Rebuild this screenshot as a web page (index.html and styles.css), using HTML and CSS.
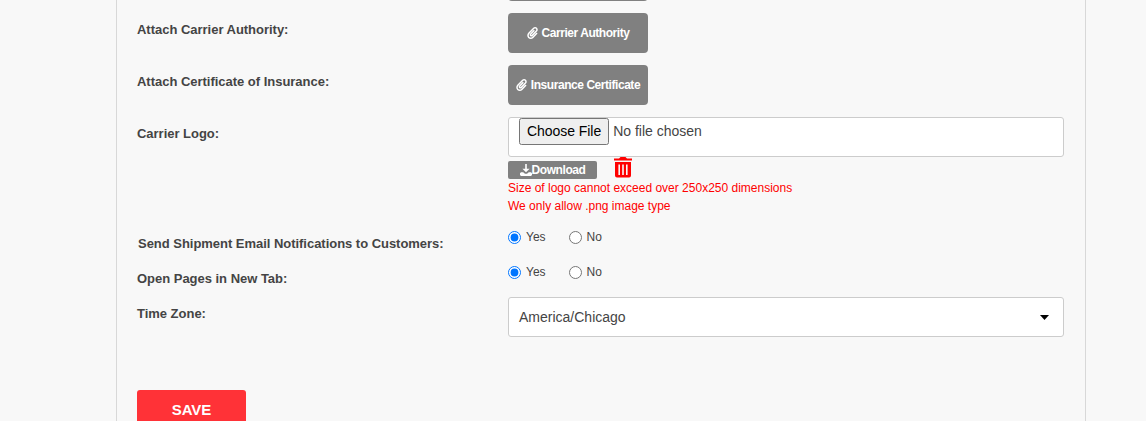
FILE: index.html
```
<!DOCTYPE html>
<html lang="en">
<head>
    <meta charset="UTF-8">
    <meta name="viewport" content="width=device-width, initial-scale=1.0">
    <title>Carrier Settings</title>
    <link rel="stylesheet" href="styles.css">
</head>
<body>
    <svg class="sprite">
        <symbol id="clip" viewBox="0 0 448 512">
            <path fill="currentColor" d="M43.246 466.142c-58.430-60.289-57.341-157.511 1.386-217.581L254.392 34c44.316-45.332 116.351-45.336 160.671 0 43.890 44.894 43.943 117.329 0 162.276L232.214 383.128c-29.855 30.537-78.633 30.111-107.982-.998-28.275-29.970-27.368-77.473 1.452-106.953l143.743-146.835c6.182-6.314 16.312-6.422 22.626-.241l22.861 22.379c6.315 6.182 6.422 16.312.241 22.626L171.427 319.927c-4.932 5.045-5.236 13.428-.648 18.292 4.372 4.634 11.245 4.711 15.688.165l182.849-186.851c19.613-20.062 19.613-52.725-.011-72.798-19.189-19.627-49.957-19.637-69.154 0L90.390 293.295c-34.763 35.560-35.299 93.120-1.191 128.313 34.010 35.093 88.985 35.137 123.058.286l172.060-175.999c6.177-6.319 16.307-6.433 22.626-.256l22.877 22.364c6.319 6.177 6.434 16.307.256 22.626l-172.060 175.998c-59.576 60.938-155.943 60.216-214.770-.485z"/>
        </symbol>
    </svg>
    <form class="settings">
        <div class="row">
            <label></label>
            <div class="field"><button type="button" class="attach"></button></div>
        </div>
        <div class="row">
            <label>Attach Carrier Authority:</label>
            <div class="field">
                <button type="button" class="attach"><svg class="clip"><use href="#clip"/></svg> Carrier Authority</button>
            </div>
        </div>
        <div class="row">
            <label>Attach Certificate of Insurance:</label>
            <div class="field">
                <button type="button" class="attach"><svg class="clip"><use href="#clip"/></svg> Insurance Certificate</button>
            </div>
        </div>
        <div class="row logo-row">
            <label for="logo">Carrier Logo:</label>
            <div class="field">
                <input type="file" id="logo" class="control file">
                <div class="logo-actions">
                    <button type="button" class="download"><svg viewBox="0 0 12 12"><path fill="currentColor" d="M5.200 0h1.600v4.800H9.600L6 8.200 2.400 4.800h2.800zM1 8.200h2.200L5 9.800h2l1.800-1.600H11l1 1V11l-1 1H1l-1-1V9.200z"/></svg>Download</button>
                    <svg class="trash" viewBox="0 0 18 21">
                        <path fill="#f00" fill-rule="evenodd" d="M0 1.500h5L6.500 0h5L13 1.500h5V3.500H0zM1 5h16v13.500a2 2 0 0 1-2 2H3a2 2 0 0 1-2-2zM4.400 7.500V18H6V7.500zM8.200 7.500V18h1.600V7.500zM12 7.500V18h1.600V7.500z"/>
                    </svg>
                </div>
                <p class="hint">Size of logo cannot exceed over 250x250 dimensions</p>
                <p class="hint">We only allow .png image type</p>
            </div>
        </div>
        <div class="row radio-row">
            <label class="notify">Send Shipment Email Notifications to Customers:</label>
            <div class="field radios">
                <input type="radio" name="notify" checked><span>Yes</span>
                <input type="radio" name="notify"><span>No</span>
            </div>
        </div>
        <div class="row radio-row">
            <label>Open Pages in New Tab:</label>
            <div class="field radios">
                <input type="radio" name="newtab" checked><span>Yes</span>
                <input type="radio" name="newtab"><span>No</span>
            </div>
        </div>
        <div class="row zone-row">
            <label>Time Zone:</label>
            <div class="field">
                <div class="control select">America/Chicago<svg viewBox="0 0 9 5"><path d="M0 0h9L4.500 5z"/></svg></div>
            </div>
        </div>
        <button type="button" class="save">SAVE</button>
    </form>
</body>
</html>
```
FILE: styles.css
```
* {
    box-sizing: border-box;
}
body {
    margin: 0;
    height: 421px;
    overflow: hidden;
    background-color: #f8f8f8;
    color: #444;
    font-family: "Liberation Sans", Arial, sans-serif;
}
.sprite {
    display: none;
}
.settings {
    width: 970px;
    margin: -39px 0 0 116px;
    padding: 0 21px 0 20px;
    border: 1px solid #d8d8d8;
    border-top: 0;
    border-bottom: 0;
}
.row {
    display: flex;
    height: 52px;
}
.row label {
    width: 371px;
    padding-top: 9px;
    font-size: 13px;
    font-weight: bold;
    line-height: 16px;
    letter-spacing: -0.02px;
}
.field {
    flex: 1;
}
.attach {
    display: flex;
    align-items: center;
    justify-content: center;
    gap: 4px;
    width: 140px;
    height: 40px;
    padding: 0;
    border: 0;
    border-radius: 4px;
    background-color: #808080;
    color: #fff;
    font-family: inherit;
    font-size: 12px;
    font-weight: bold;
    letter-spacing: -0.45px;
}
.clip {
    width: 11px;
    height: 12px;
}
.control {
    display: block;
    width: 556px;
    height: 40px;
    border: 1px solid #ccc;
    border-radius: 3px;
    background-color: #fff;
    color: #444;
    font-family: inherit;
    font-size: 14px;
}
.file {
    padding: 0 10px;
}
.file::file-selector-button {
    height: 27px;
    padding: 0 6px 2px;
    letter-spacing: -0.05px;
}
.logo-row {
    height: 117px;
}
.logo-actions {
    display: flex;
    align-items: flex-start;
    height: 22px;
}
.download {
    display: flex;
    align-items: center;
    justify-content: center;
    width: 89px;
    height: 18px;
    margin-top: 4px;
    padding: 0;
    border: 0;
    border-radius: 2px;
    background-color: #808080;
    color: #fff;
    font-family: inherit;
    font-size: 12px;
    font-weight: bold;
    letter-spacing: -0.42px;
}
.download svg {
    width: 12px;
    height: 12px;
}
.trash {
    width: 18px;
    height: 21px;
    margin-left: 17px;
}
.hint {
    margin: 0;
    color: #f00;
    font-size: 12px;
    line-height: 18px;
}
.radio-row {
    height: 35px;
}
.radio-row label,
.zone-row label {
    padding-top: 2px;
}
.row .notify {
    padding-left: 1px;
    letter-spacing: -0.03px;
}
.radios {
    display: flex;
    align-items: flex-start;
    font-size: 12px;
    line-height: 14px;
}
.radios span {
    margin: -4px 23px 0 5px;
}
.radios input {
    width: 13px;
    height: 13px;
    margin: -3px 0 0;
}
.zone-row {
    height: 93px;
}
.zone-row .field {
    margin-top: -7px;
}
.select {
    display: flex;
    align-items: center;
    justify-content: space-between;
    padding: 0 14px 0 10px;
}
.select svg {
    width: 9px;
    height: 5px;
}
.save {
    width: 109px;
    height: 38px;
    margin-top: -7px;
    border: 0;
    border-radius: 3px;
    background-color: #ff3237;
    color: #fff;
    font-family: inherit;
    font-size: 15px;
    font-weight: bold;
}
```
